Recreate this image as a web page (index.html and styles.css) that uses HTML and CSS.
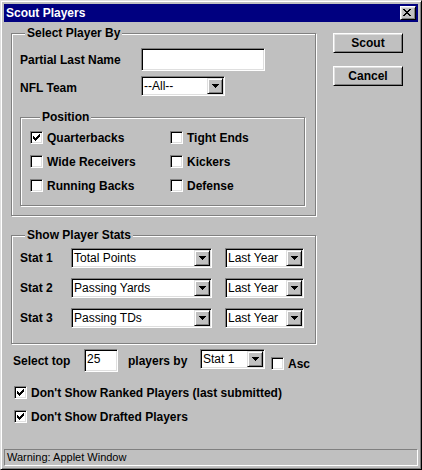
FILE: index.html
```html
<!DOCTYPE html>
<html>
<head>
<meta charset="utf-8">
<title>Scout Players</title>
<link rel="stylesheet" href="styles.css">
</head>
<body>
<div class="window">
  <div class="titlebar">
    <span class="title">Scout Players</span>
    <span class="close-btn"><svg width="8" height="7" viewBox="0 0 8 7" shape-rendering="crispEdges"><path d="M0 0h2v1H0zM6 0h2v1H6zM1 1h2v1H1zM5 1h2v1H5zM2 2h4v1H2zM3 3h2v1H3zM2 4h4v1H2zM1 5h2v1H1zM5 5h2v1H5zM0 6h2v1H0zM6 6h2v1H6z"/></svg></span>
  </div>
  <div class="client">
    <div class="top">
      <div class="leftcol">
        <div class="group g-select">
          <div class="legend">Select Player By</div>
          <div class="row r-name"><span class="lbl w-name">Partial Last Name</span><span class="field f-name"></span></div>
          <div class="row r-team"><span class="lbl w-name lbl-low">NFL Team</span><span class="combo c-team"><span class="combo-text">--All--</span><span class="arrow"><svg width="7" height="4" viewBox="0 0 7 4" shape-rendering="crispEdges"><path d="M0 0h7v1H0zM1 1h5v1H1zM2 2h3v1H2zM3 3h1v1H3z"/></svg></span></span></div>
          <div class="group g-pos">
            <div class="legend">Position</div>
            <div class="checkgrid">
              <div class="chk"><span class="box"><svg width="7" height="7" viewBox="0 0 7 7" shape-rendering="crispEdges"><path d="M6 0h1v1H6zM5 1h2v1H5zM0 2h1v1H0zM4 2h3v1H4zM0 3h2v1H0zM3 3h3v1H3zM0 4h5v1H0zM1 5h3v1H1zM2 6h1v1H2z"/></svg></span>Quarterbacks</div>
              <div class="chk"><span class="box"></span>Tight Ends</div>
              <div class="chk"><span class="box"></span>Wide Receivers</div>
              <div class="chk"><span class="box"></span>Kickers</div>
              <div class="chk"><span class="box"></span>Running Backs</div>
              <div class="chk"><span class="box"></span>Defense</div>
            </div>
          </div>
        </div>
        <div class="group g-stats">
          <div class="legend">Show Player Stats</div>
          <div class="row stat-row first"><span class="lbl w-stat">Stat 1</span><span class="combo c-stat"><span class="combo-text">Total Points</span><span class="arrow"><svg width="7" height="4" viewBox="0 0 7 4" shape-rendering="crispEdges"><path d="M0 0h7v1H0zM1 1h5v1H1zM2 2h3v1H2zM3 3h1v1H3z"/></svg></span></span><span class="combo c-year"><span class="combo-text">Last Year</span><span class="arrow"><svg width="7" height="4" viewBox="0 0 7 4" shape-rendering="crispEdges"><path d="M0 0h7v1H0zM1 1h5v1H1zM2 2h3v1H2zM3 3h1v1H3z"/></svg></span></span></div>
          <div class="row stat-row"><span class="lbl w-stat">Stat 2</span><span class="combo c-stat"><span class="combo-text">Passing Yards</span><span class="arrow"><svg width="7" height="4" viewBox="0 0 7 4" shape-rendering="crispEdges"><path d="M0 0h7v1H0zM1 1h5v1H1zM2 2h3v1H2zM3 3h1v1H3z"/></svg></span></span><span class="combo c-year"><span class="combo-text">Last Year</span><span class="arrow"><svg width="7" height="4" viewBox="0 0 7 4" shape-rendering="crispEdges"><path d="M0 0h7v1H0zM1 1h5v1H1zM2 2h3v1H2zM3 3h1v1H3z"/></svg></span></span></div>
          <div class="row stat-row"><span class="lbl w-stat">Stat 3</span><span class="combo c-stat"><span class="combo-text">Passing TDs</span><span class="arrow"><svg width="7" height="4" viewBox="0 0 7 4" shape-rendering="crispEdges"><path d="M0 0h7v1H0zM1 1h5v1H1zM2 2h3v1H2zM3 3h1v1H3z"/></svg></span></span><span class="combo c-year"><span class="combo-text">Last Year</span><span class="arrow"><svg width="7" height="4" viewBox="0 0 7 4" shape-rendering="crispEdges"><path d="M0 0h7v1H0zM1 1h5v1H1zM2 2h3v1H2zM3 3h1v1H3z"/></svg></span></span></div>
        </div>
      </div>
      <div class="buttons">
        <button class="btn">Scout</button>
        <button class="btn">Cancel</button>
      </div>
    </div>
    <div class="row sel-row">
      <span class="lbl w-sel">Select top</span>
      <span class="field f-top">25</span>
      <span class="lbl w-by">players by</span>
      <span class="combo c-by"><span class="combo-text">Stat 1</span><span class="arrow"><svg width="7" height="4" viewBox="0 0 7 4" shape-rendering="crispEdges"><path d="M0 0h7v1H0zM1 1h5v1H1zM2 2h3v1H2zM3 3h1v1H3z"/></svg></span></span>
      <div class="chk asc"><span class="box"></span>Asc</div>
    </div>
    <div class="chk opt opt-1"><span class="box"><svg width="7" height="7" viewBox="0 0 7 7" shape-rendering="crispEdges"><path d="M6 0h1v1H6zM5 1h2v1H5zM0 2h1v1H0zM4 2h3v1H4zM0 3h2v1H0zM3 3h3v1H3zM0 4h5v1H0zM1 5h3v1H1zM2 6h1v1H2z"/></svg></span>Don't Show Ranked Players (last submitted)</div>
    <div class="chk opt opt-2"><span class="box"><svg width="7" height="7" viewBox="0 0 7 7" shape-rendering="crispEdges"><path d="M6 0h1v1H6zM5 1h2v1H5zM0 2h1v1H0zM4 2h3v1H4zM0 3h2v1H0zM3 3h3v1H3zM0 4h5v1H0zM1 5h3v1H1zM2 6h1v1H2z"/></svg></span>Don't Show Drafted Players</div>
  </div>
  <div class="status">Warning: Applet Window</div>
</div>
</body>
</html>
```
FILE: styles.css
```css
* { box-sizing: border-box; }
html, body { margin: 0; padding: 0; }
body {
  background: #c0c0c0;
  font-family: "Liberation Sans", Arial, sans-serif;
  font-size: 12px;
  color: #000;
}
.window {
  width: 422px;
  height: 470px;
  background: #c0c0c0;
  border: 1px solid;
  border-color: #dfdfdf #000 #000 #dfdfdf;
  box-shadow: inset 1px 1px #fff, inset -1px -1px #808080;
  padding: 3px;
  display: flex;
  flex-direction: column;
}
.titlebar {
  flex: none;
  height: 18px;
  background: #000080;
  color: #fff;
  display: flex;
  align-items: center;
  justify-content: space-between;
  padding: 0 2px 0 2px;
}
.title { font-weight: bold; line-height: 18px; }
.close-btn {
  width: 16px;
  height: 14px;
  background: #c0c0c0;
  border: 1px solid;
  border-color: #fff #000 #000 #fff;
  box-shadow: inset 1px 1px #dfdfdf, inset -1px -1px #808080;
  display: flex;
  align-items: flex-start;
  justify-content: flex-start;
  padding: 2px 0 0 2px;
}
.close-btn svg, .arrow svg, .box svg { display: block; fill: #000; }
.client { flex: 1; }
.top { display: flex; align-items: flex-start; }
.leftcol { margin-left: 7px; margin-top: 11px; }
.group {
  border: 1px solid #808080;
  box-shadow: inset 1px 1px #fff, 1px 1px #fff;
}
.legend {
  width: fit-content;
  background: #c0c0c0;
  font-weight: bold;
  line-height: 14px;
  padding: 0 2px;
  margin-top: -8px;
  white-space: nowrap;
}
.g-select { width: 305px; padding: 0 0 9px 8px; }
.g-select > .legend, .g-stats > .legend { margin-left: 5px; }
.row { display: flex; align-items: center; }
.lbl { font-weight: bold; line-height: 14px; white-space: nowrap; flex: none; }
.lbl-low { padding-top: 4px; }
.r-name { margin-top: 8px; height: 23px; }
.r-team { margin-top: 5px; height: 20px; }
.w-name { width: 121px; }
.field {
  display: block;
  flex: none;
  background: #fff;
  border: 1px solid;
  border-color: #808080 #fff #fff #808080;
  box-shadow: inset 1px 1px #000, inset -1px -1px #dfdfdf;
  height: 23px;
  line-height: 19px;
  padding: 0 2px;
  white-space: nowrap;
}
.f-name { width: 124px; }
.combo {
  display: flex;
  flex: none;
  align-items: center;
  height: 20px;
  background: #fff;
  border: 1px solid;
  border-color: #808080 #fff #fff #808080;
  box-shadow: inset 1px 1px #000, inset -1px -1px #dfdfdf;
  padding: 1px;
}
.combo-text {
  flex: 1;
  padding-left: 1px;
  line-height: 16px;
  white-space: nowrap;
  overflow: hidden;
}
.arrow {
  flex: none;
  width: 16px;
  height: 16px;
  background: #c0c0c0;
  border: 1px solid;
  border-color: #dfdfdf #000 #000 #dfdfdf;
  box-shadow: inset 1px 1px #fff, inset -1px -1px #808080;
  display: flex;
  align-items: center;
  justify-content: center;
}
.c-team { width: 84px; }
.g-pos { width: 285px; margin-top: 21px; padding: 0 0 13px 9px; }
.g-pos > .legend { margin-left: 10px; }
.checkgrid {
  display: grid;
  grid-template-columns: 140px auto;
  row-gap: 11px;
  margin-top: 7px;
}
.chk {
  display: flex;
  align-items: center;
  gap: 4px;
  height: 13px;
  font-weight: bold;
  line-height: 14px;
  white-space: nowrap;
}
.box {
  flex: none;
  width: 13px;
  height: 13px;
  background: #fff;
  border: 1px solid;
  border-color: #808080 #fff #fff #808080;
  box-shadow: inset 1px 1px #000, inset -1px -1px #dfdfdf;
  display: flex;
  align-items: center;
  justify-content: center;
}
.g-stats { width: 305px; margin-top: 19px; padding: 0 0 15px 8px; }
.stat-row { height: 20px; margin-top: 10px; }
.stat-row.first { margin-top: 6px; }
.w-stat { width: 51px; }
.c-stat { width: 141px; }
.c-year { width: 79px; margin-left: 13px; }
.buttons {
  margin-left: 17px;
  margin-top: 11px;
  display: flex;
  flex-direction: column;
  gap: 13px;
}
.btn {
  width: 70px;
  height: 20px;
  margin: 0;
  padding: 0;
  background: #c0c0c0;
  font: bold 12px "Liberation Sans", Arial, sans-serif;
  color: #000;
  border: 1px solid;
  border-color: #fff #000 #000 #fff;
  box-shadow: inset 1px 1px #dfdfdf, inset -1px -1px #808080;
  border-radius: 0;
}
.sel-row { height: 23px; margin-top: 5px; padding-left: 9px; align-items: flex-start; }
.sel-row > .lbl { align-self: center; }
.w-sel { width: 71px; }
.f-top { width: 34px; }
.w-by { width: 72px; margin-left: 10px; }
.c-by { width: 65px; }
.asc { margin-left: 6px; margin-top: 8px; }
.opt { padding-left: 10px; }
.opt-1 { margin-top: 14px; }
.opt-2 { margin-top: 11px; }
.status {
  flex: none;
  height: 17px;
  border: 1px solid;
  border-color: #808080 #fff #fff #808080;
  padding-left: 2px;
  font-size: 11px;
  line-height: 15px;
  white-space: nowrap;
}
```
